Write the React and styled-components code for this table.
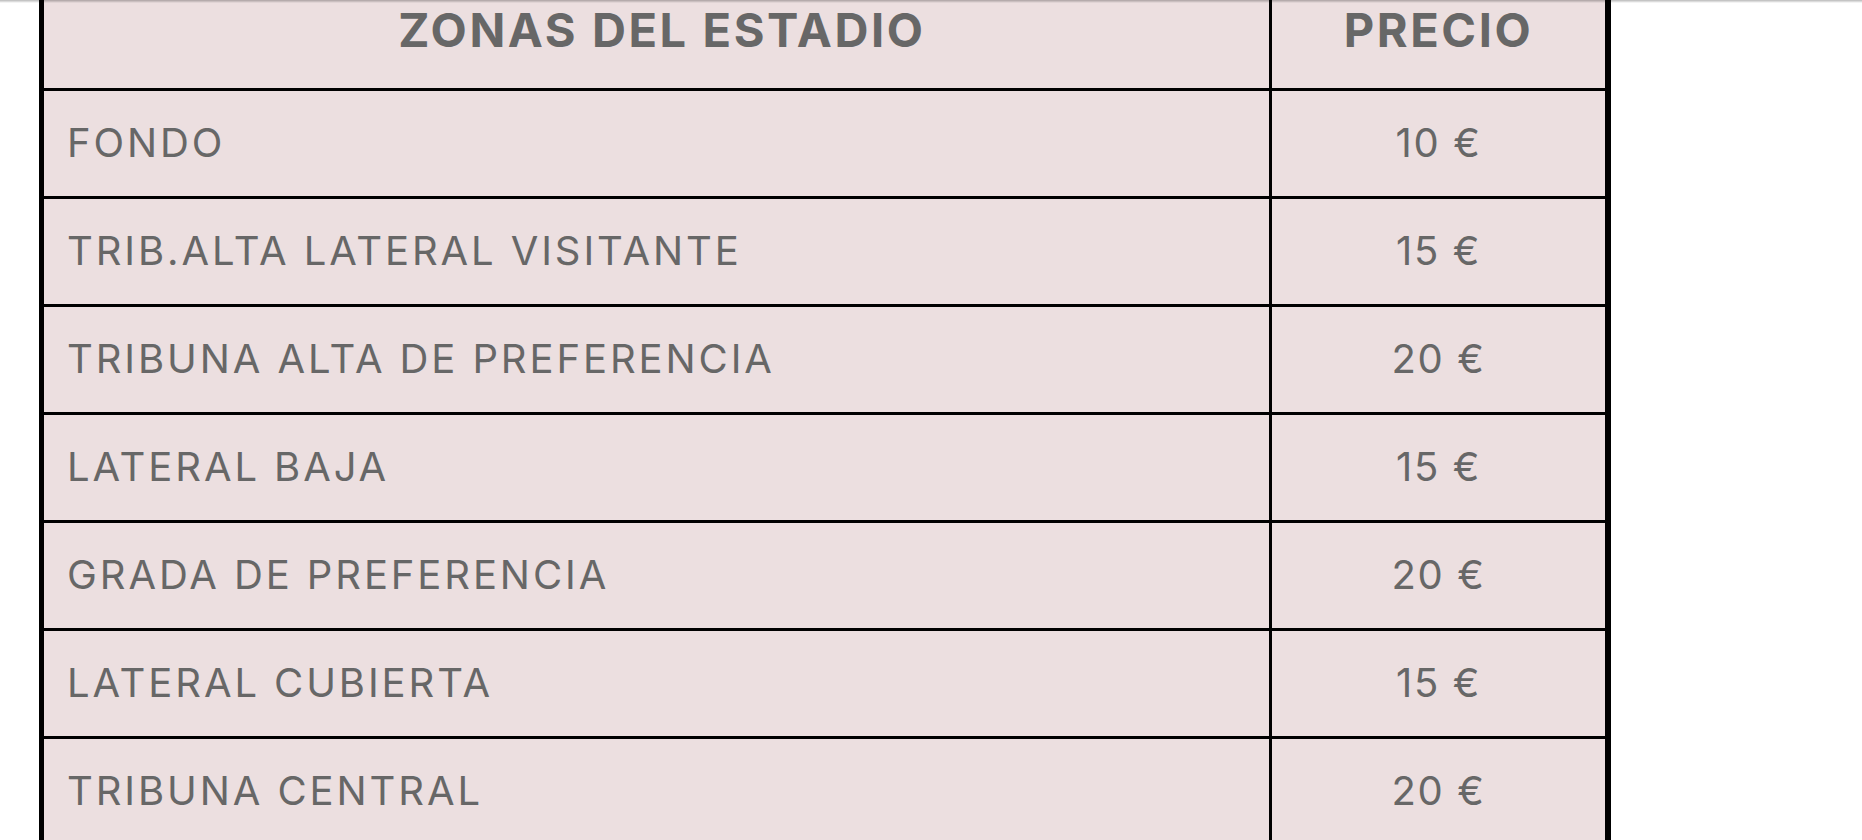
import React from "react";
import styled, { createGlobalStyle } from "styled-components";

const GlobalStyle = createGlobalStyle`
  html, body {
    margin: 0;
    padding: 0;
    background: #fff;
  }
  body {
    font-family: Inter, "Noto Sans", "DejaVu Sans", sans-serif;
    overflow: hidden;
  }
`;

// shadow of the fixed site header that sits just above the viewport
const HeaderShadow = styled.div`
  position: fixed;
  top: 0;
  left: 0;
  right: 0;
  height: 3px;
  background: linear-gradient(rgba(0, 0, 0, 0.28), rgba(0, 0, 0, 0));
  pointer-events: none;
`;

const Page = styled.div`
  padding-left: 39px;
`;

const Table = styled.div`
  width: 1572px;
  box-sizing: border-box;
  border-left: 5px solid #000;
  border-right: 6px solid #000;
  background: #ecdfe0;
`;

const Row = styled.div`
  display: grid;
  grid-template-columns: 1228px 333px;
  height: ${p => (p.head ? "91px" : "108px")};
  box-sizing: border-box;
  border-bottom: 3px solid #000;
`;

const Cell = styled.div`
  display: flex;
  align-items: center;
  justify-content: flex-start;
  box-sizing: border-box;
  padding: 0 0 2px 23px;
  border-right: ${p => (p.first ? "3px solid #000" : "none")};
  color: #676767;
  font-size: 40px;
  font-weight: 400;
  letter-spacing: 2.9px;
  white-space: nowrap;
`;

const PriceCell = styled(Cell)`
  justify-content: center;
  padding: 0 0 2px;
  letter-spacing: 1.6px;
`;

const HeadCell = styled(Cell)`
  align-items: flex-start;
  justify-content: center;
  padding: 1px 0 0 ${p => (p.first ? "11px" : "0")};
  font-size: 47px;
  font-weight: 700;
  letter-spacing: 2.6px;
`;

const zonas = [
  ["FONDO", "10 €"],
  ["TRIB.ALTA LATERAL VISITANTE", "15 €"],
  ["TRIBUNA ALTA DE PREFERENCIA", "20 €"],
  ["LATERAL BAJA", "15 €"],
  ["GRADA DE PREFERENCIA", "20 €"],
  ["LATERAL CUBIERTA", "15 €"],
  ["TRIBUNA CENTRAL", "20 €"]
];

export default function App() {
  return (
    <>
      <GlobalStyle />
      <Page>
        <Table>
          <Row head>
            <HeadCell first>ZONAS DEL ESTADIO</HeadCell>
            <HeadCell>PRECIO</HeadCell>
          </Row>
          {zonas.map(([zona, precio]) => (
            <Row key={zona}>
              <Cell first>{zona}</Cell>
              <PriceCell>{precio}</PriceCell>
            </Row>
          ))}
        </Table>
      </Page>
      <HeaderShadow />
    </>
  );
}
